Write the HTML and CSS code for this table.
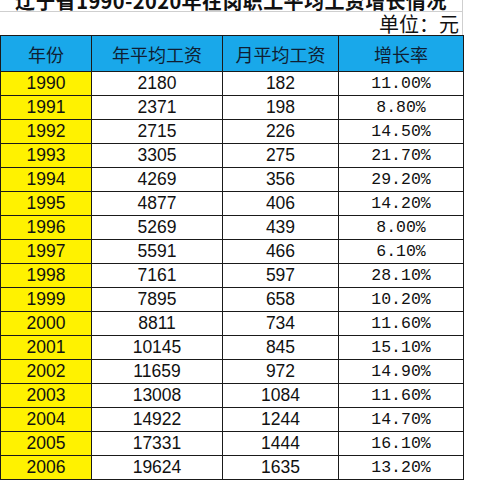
FILE: index.html
```html
<!DOCTYPE html>
<html lang="zh-CN">
<head>
<meta charset="utf-8">
<link rel="stylesheet" href="styles.css">
</head>
<body>
<div class="sheet">
  <div class="title"><span class="title-text">辽宁省1990-2020年在岗职工平均工资增长情况</span></div>
  <div class="unit">单位：元</div>
  <table class="grid">
    <colgroup><col class="c1"><col class="c2"><col class="c3"><col class="c4"></colgroup>
    <thead>
      <tr><th>年份</th><th>年平均工资</th><th>月平均工资</th><th>增长率</th></tr>
    </thead>
    <tbody>
      <tr><td class="yr">1990</td><td>2180</td><td>182</td><td class="pct">11.00%</td></tr>
      <tr><td class="yr">1991</td><td>2371</td><td>198</td><td class="pct">8.80%</td></tr>
      <tr><td class="yr">1992</td><td>2715</td><td>226</td><td class="pct">14.50%</td></tr>
      <tr><td class="yr">1993</td><td>3305</td><td>275</td><td class="pct">21.70%</td></tr>
      <tr><td class="yr">1994</td><td>4269</td><td>356</td><td class="pct">29.20%</td></tr>
      <tr><td class="yr">1995</td><td>4877</td><td>406</td><td class="pct">14.20%</td></tr>
      <tr><td class="yr">1996</td><td>5269</td><td>439</td><td class="pct">8.00%</td></tr>
      <tr><td class="yr">1997</td><td>5591</td><td>466</td><td class="pct">6.10%</td></tr>
      <tr><td class="yr">1998</td><td>7161</td><td>597</td><td class="pct">28.10%</td></tr>
      <tr><td class="yr">1999</td><td>7895</td><td>658</td><td class="pct">10.20%</td></tr>
      <tr><td class="yr">2000</td><td>8811</td><td>734</td><td class="pct">11.60%</td></tr>
      <tr><td class="yr">2001</td><td>10145</td><td>845</td><td class="pct">15.10%</td></tr>
      <tr><td class="yr">2002</td><td>11659</td><td>972</td><td class="pct">14.90%</td></tr>
      <tr><td class="yr">2003</td><td>13008</td><td>1084</td><td class="pct">11.60%</td></tr>
      <tr><td class="yr">2004</td><td>14922</td><td>1244</td><td class="pct">14.70%</td></tr>
      <tr><td class="yr">2005</td><td>17331</td><td>1444</td><td class="pct">16.10%</td></tr>
      <tr><td class="yr">2006</td><td>19624</td><td>1635</td><td class="pct">13.20%</td></tr>
    </tbody>
  </table>
</div>
</body>
</html>
```
FILE: styles.css
```css
html, body {
  margin: 0;
  padding: 0;
  background: #ffffff;
}
body {
  font-family: "Liberation Sans", "Noto Sans CJK SC", sans-serif;
  color: #111;
  overflow: hidden;
  height: 480px;
}
.sheet {
  width: 463px;
}
.title {
  height: 12px;
  overflow: hidden;
  border-bottom: 1px solid #cfcfcf;
  border-right: 1px solid #cfcfcf;
  box-sizing: border-box;
}
.title-text {
  display: block;
  height: 11px;
  overflow: hidden;
  padding-left: 15px;
  font-family: "Noto Sans CJK SC", sans-serif;
  font-weight: 700;
  font-size: 20px;
  line-height: 2px;
  letter-spacing: 0.4px;
  white-space: nowrap;
  color: #111;
}
.unit {
  height: 23px;
  box-sizing: border-box;
  border-right: 1px solid #cfcfcf;
  text-align: right;
  padding-right: 3px;
  font-family: "Noto Sans CJK SC", sans-serif;
  font-size: 20px;
  line-height: 23px;
  color: #111;
}
.grid {
  border-collapse: collapse;
  table-layout: fixed;
  width: 463px;
}
.c1 { width: 91px; }
.c2 { width: 131px; }
.c3 { width: 116px; }
.c4 { width: 125px; }
.grid th, .grid td {
  border: 1px solid #1a1a1a;
  padding: 0;
  text-align: center;
  vertical-align: middle;
}
.grid th {
  height: 35px;
  background: #19a8ea;
  font-family: "Noto Sans CJK SC", sans-serif;
  font-weight: 400;
  font-size: 18px;
  color: #0f1e33;
}
.grid td {
  height: 23px;
  font-size: 17.5px;
  line-height: 23px;
  color: #111;
}
.grid td.yr {
  background: #fff200;
}
.grid td.pct {
  font-family: "Liberation Mono", monospace;
  font-size: 16.5px;
}
```
